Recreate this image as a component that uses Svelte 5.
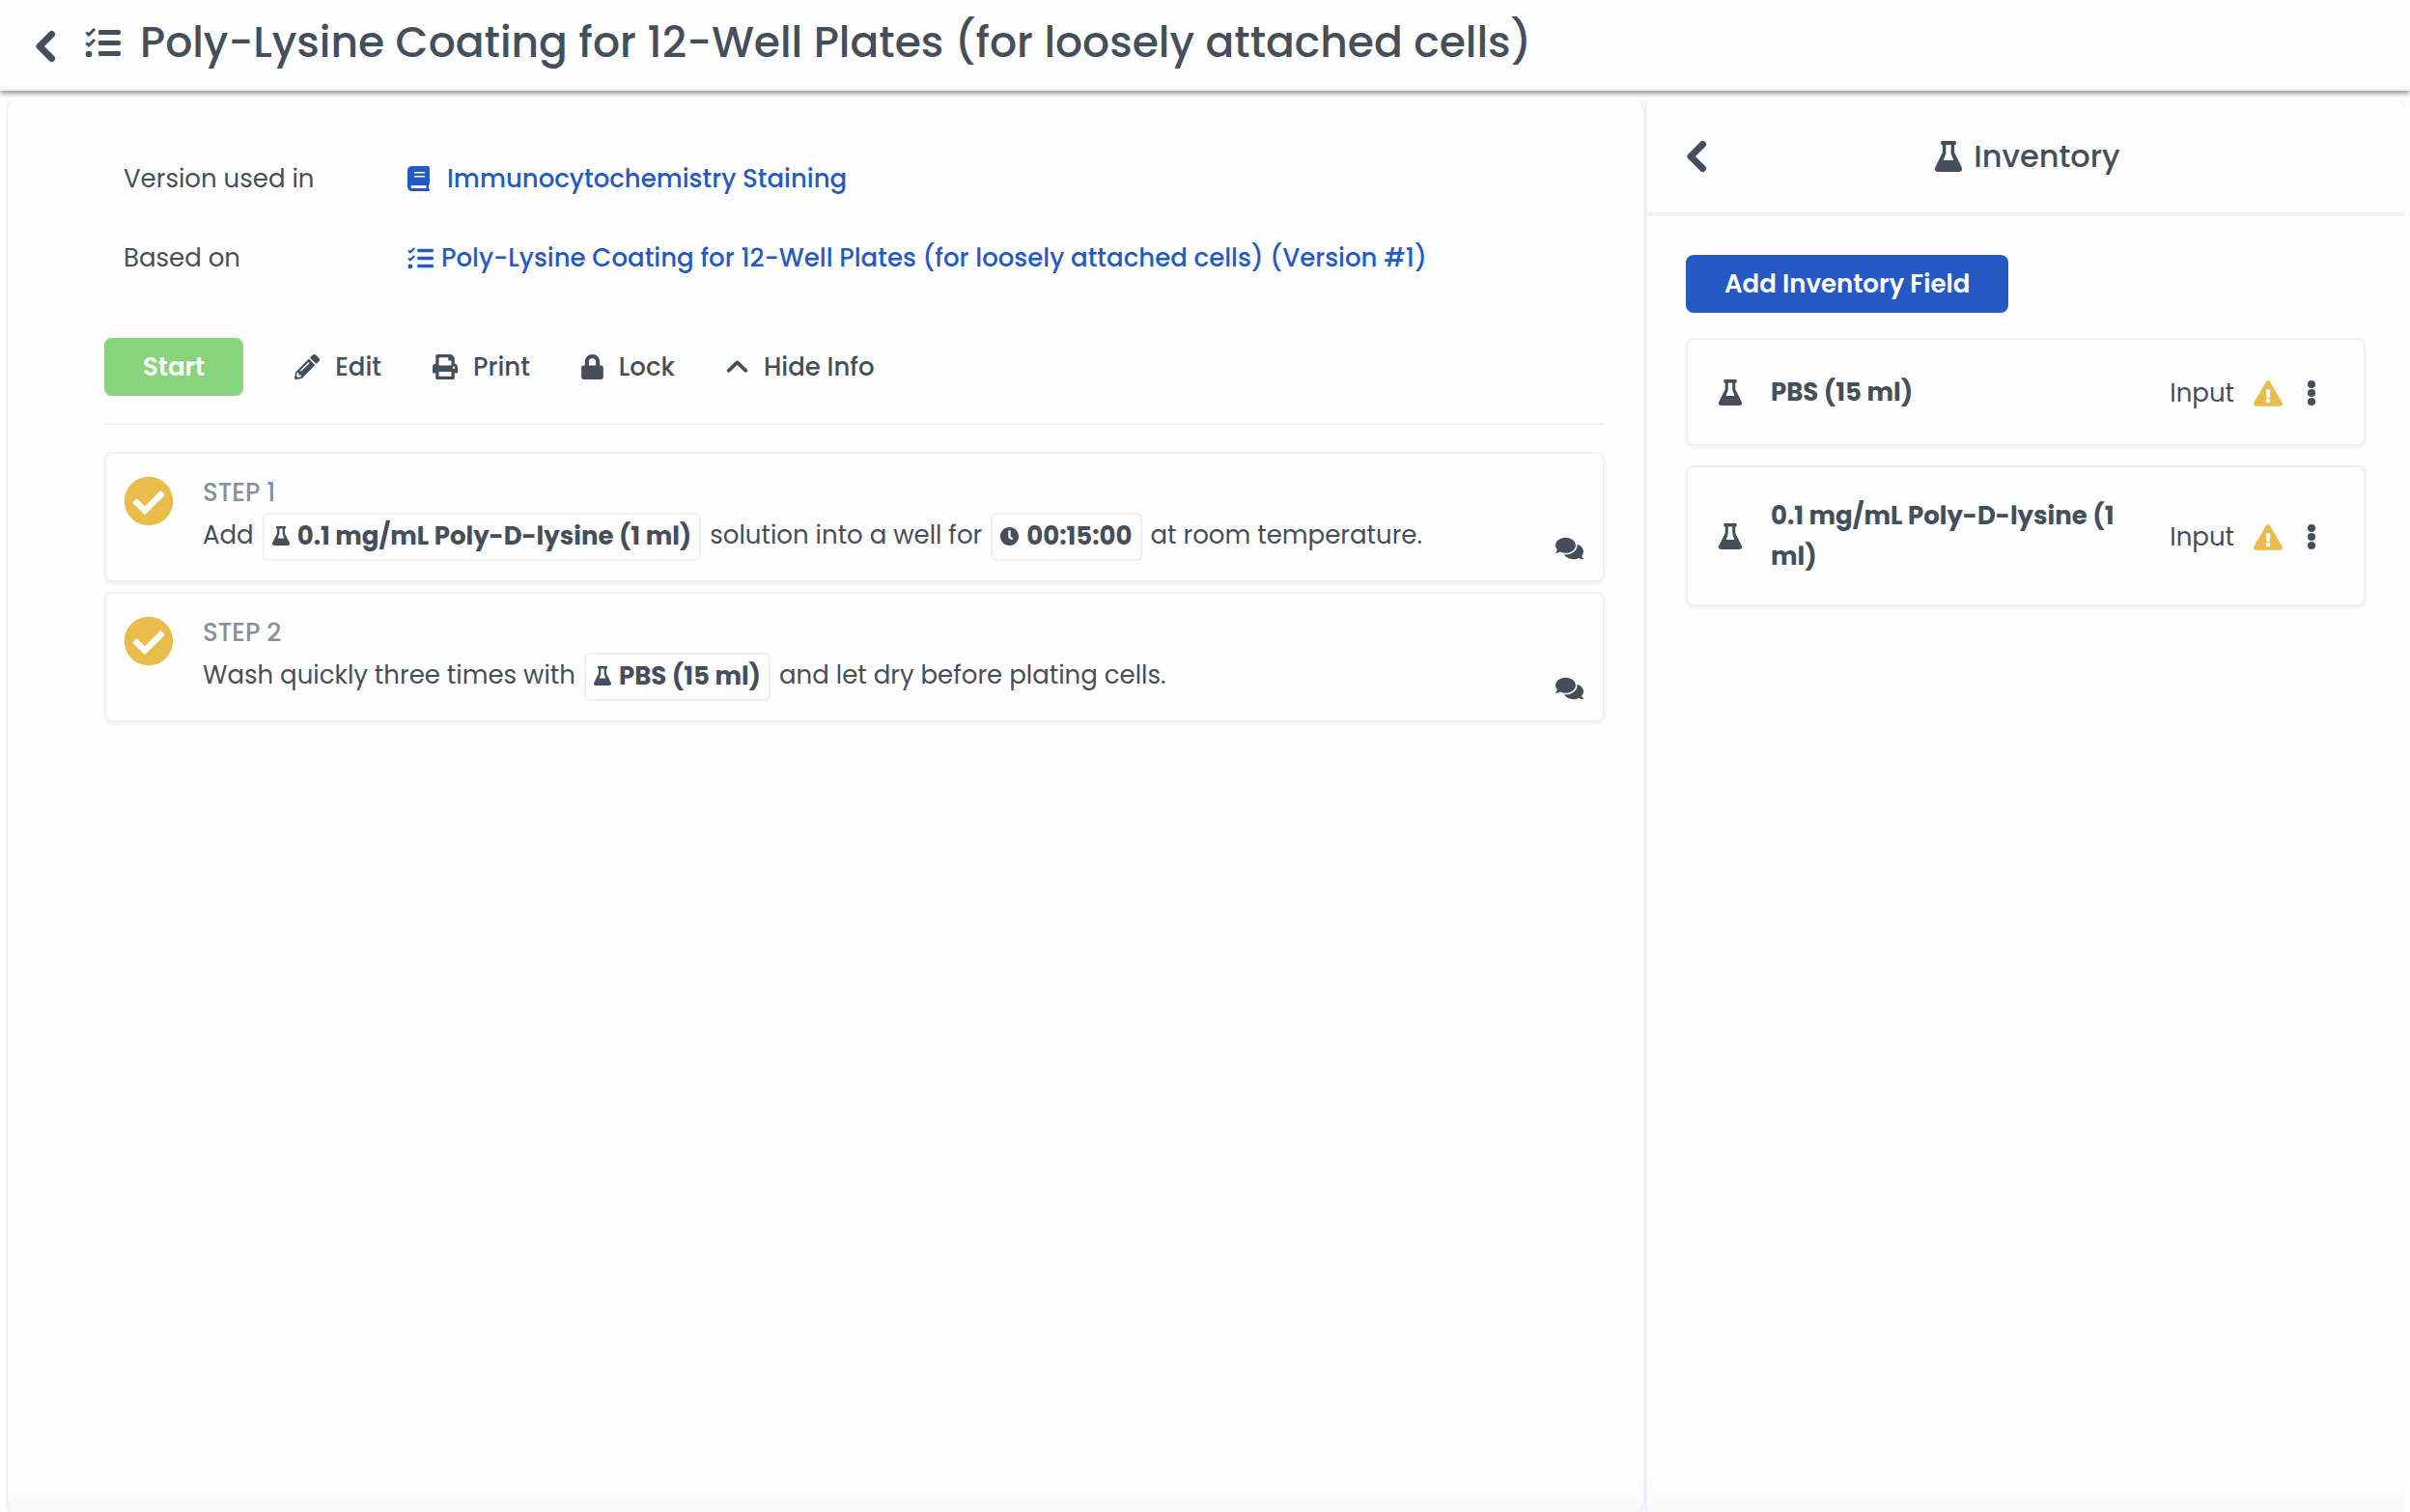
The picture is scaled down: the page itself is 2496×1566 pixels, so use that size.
<script lang="ts">
  const flask = "M8 0h16q1 0 1 2t-1 2h-1v8l8 14q3 6-3 6H4q-6 0-3-6l8-14V4H8Q7 4 7 2t1-2zM13 4v9l-3 7h12l-3-7V4z";
  const warning = "M569.517 440.013C587.975 472.007 564.806 512 527.94 512H48.054c-36.937 0-59.999-40.055-41.577-71.987L246.423 23.985c18.467-32.009 64.72-31.951 83.154 0l239.94 416.028zM288 354c-25.405 0-46 20.595-46 46s20.595 46 46 46 46-20.595 46-46-20.595-46-46-46zm-43.673-165.346l7.418 136c.347 6.364 5.609 11.346 11.982 11.346h48.546c6.373 0 11.635-4.982 11.982-11.346l7.418-136c.375-6.874-5.098-12.654-11.982-12.654h-63.383c-6.884 0-12.356 5.78-11.981 12.654z";
  const comments = "M416 192c0-88.4-93.1-160-208-160S0 103.6 0 192c0 34.3 14.1 65.9 38 92-13.4 30.2-35.5 54.2-35.8 54.5-2.2 2.3-2.8 5.7-1.5 8.7S4.8 352 8 352c36.6 0 66.9-12.3 88.7-25 32.2 15.7 70.3 25 111.3 25 114.9 0 208-71.6 208-160zm122 220c23.9-26 38-57.7 38-92 0-66.9-53.5-124.2-129.3-148.1.9 6.6 1.3 13.3 1.3 20.1 0 105.9-107.7 192-240 192-10.8 0-21.3-.8-31.7-1.9C207.8 439.6 281.8 480 368 480c41 0 79.1-9.2 111.3-25 21.8 12.7 52.1 25 88.7 25 3.2 0 6.1-1.9 7.3-4.8 1.3-2.9.7-6.3-1.5-8.7-.3-.3-22.4-24.2-35.8-54.5z";
  const checkCircle = "M504 256c0 136.967-111.033 248-248 248S8 392.967 8 256 119.033 8 256 8s248 111.033 248 248zM227.314 387.314l184-184c6.248-6.248 6.248-16.379 0-22.627l-22.627-22.627c-6.248-6.249-16.379-6.249-22.628 0L216 308.118l-70.059-70.059c-6.248-6.248-16.379-6.248-22.628 0l-22.627 22.627c-6.248 6.248-6.248 16.379 0 22.627l104 104c6.249 6.249 16.379 6.249 22.628.001z";
  const clock = "M256 8C119 8 8 119 8 256s111 248 248 248 248-111 248-248S393 8 256 8zm92.49 313l-20 25a16 16 0 01-22.49 2.5l-67-49.72a40 40 0 01-15-31.23V112a16 16 0 0116-16h32a16 16 0 0116 16v144l58 42.5a16 16 0 012.49 22.5z";

  const actions = [
    {
      label: "Edit",
      width: 26,
      viewBox: "0 0 512 512",
      path: "M497.9 142.1l-46.1 46.1c-4.7 4.7-12.3 4.7-17 0l-111-111c-4.7-4.7-4.7-12.3 0-17l46.1-46.1c18.7-18.7 49.1-18.7 67.9 0l60.1 60.1c18.8 18.7 18.8 49.1 0 67.9zM284.2 99.8L21.6 362.4.4 483.9c-2.9 16.4 11.4 30.6 27.8 27.8l121.5-21.3 262.6-262.6c4.7-4.7 4.7-12.3 0-17l-111-111c-4.8-4.7-12.4-4.7-17.1 0zM124.1 339.9c-5.5-5.5-5.5-14.3 0-19.8l154-154c5.5-5.5 14.3-5.5 19.8 0s5.5 14.3 0 19.8l-154 154c-5.5 5.5-14.3 5.5-19.8 0zM88 424h48v36.3l-64.5 11.3-31.1-31.1L51.7 376H88v48z",
    },
    {
      label: "Print",
      width: 26,
      viewBox: "0 0 512 512",
      path: "M448 192V77.25c0-8.49-3.37-16.62-9.37-22.63L393.37 9.37c-6-6-14.14-9.37-22.63-9.37H96C78.33 0 64 14.33 64 32v160c-35.35 0-64 28.65-64 64v112c0 8.84 7.16 16 16 16h48v96c0 17.67 14.33 32 32 32h320c17.67 0 32-14.33 32-32v-96h48c8.84 0 16-7.16 16-16V256c0-35.35-28.65-64-64-64zm-64 256H128v-96h256v96zm0-224H128V64h192v48c0 8.84 7.16 16 16 16h48v96zm48 72c-13.25 0-24-10.75-24-24 0-13.26 10.75-24 24-24s24 10.74 24 24c0 13.25-10.75 24-24 24z",
    },
    {
      label: "Lock",
      width: 23,
      viewBox: "0 0 448 512",
      path: "M400 224h-24v-72C376 68.2 307.8 0 224 0S72 68.2 72 152v72H48c-26.5 0-48 21.5-48 48v192c0 26.5 21.5 48 48 48h352c26.5 0 48-21.5 48-48V272c0-26.5-21.5-48-48-48zm-104 0H152v-72c0-39.7 32.3-72 72-72s72 32.3 72 72v72z",
    },
    {
      label: "Hide Info",
      width: 23,
      viewBox: "0 0 23 26",
      path: "M9.8 7.3q1.7-1.6 3.4 0l8.6 8.5q1 1.2 0 2.3-1.5 1.3-3 0l-7.3-7.2-7.3 7.2q-1.5 1.3-3 0-1-1.2 0-2.3z",
    },
  ];

  const steps = [
    [
      { text: "Add" },
      { text: "0.1 mg/mL Poly-D-lysine (1 ml)", icon: "flask" },
      { text: "solution into a well for" },
      { text: "00:15:00", icon: "clock" },
      { text: "at room temperature." },
    ],
    [
      { text: "Wash quickly three times with" },
      { text: "PBS (15 ml)", icon: "flask" },
      { text: "and let dry before plating cells." },
    ],
  ];

  const inventory = ["PBS (15 ml)", "0.1 mg/mL Poly-D-lysine (1 ml)"];
</script>

{#snippet chevron()}
  <svg width="22" height="34" viewBox="0 0 22 34" aria-hidden="true">
    <path class="chevron" d="M17.5 4.500L5 17l12.500 12.500" />
  </svg>
{/snippet}

{#snippet tasks(width: number, height: number)}
  <svg {width} {height} viewBox="0 0 37 31" aria-hidden="true">
    <path d="M15 2h20q2 0 2 2v1q0 2-2 2H15q-1 0-1-2V4q0-2 1-2zM15 13h20q2 0 2 2v1q0 2-2 2H15q-1 0-1-2v-1q0-2 1-2zM15 24h20q2 0 2 2v1q0 2-2 2H15q-1 0-1-2v-1q0-2 1-2z" />
    <circle cx="4" cy="27" r="3.3" />
    <path class="ticks" d="M1.300 4.500L4 7l6-6M1.300 15.500L4 18l6-6" />
  </svg>
{/snippet}

{#snippet flaskIcon(width: number, height: number)}
  <svg {width} {height} viewBox="0 0 32 32" preserveAspectRatio="none" aria-hidden="true">
    <path fill-rule="evenodd" d={flask} />
  </svg>
{/snippet}

<div class="page">
  <header>
    <button class="icon" aria-label="Back">{@render chevron()}</button>
    {@render tasks(37, 31)}
    <h1>Poly-Lysine Coating for 12-Well Plates (for loosely attached cells)</h1>
  </header>

  <div class="body">
    <main>
      <dl>
        <dt>Version used in</dt>
        <dd>
          <a class="wide" href="#staining">
            <svg width="23" height="26" viewBox="0 0 23 26" aria-hidden="true">
              <path fill-rule="evenodd" d="M5 0h16q2 0 2 2v16q0 1-1 2v3q1 1 1 2t-1 1H5q-5 0-5-5V5q0-5 5-5zM7 6v1.500h11V6zM7 10v1.500h11V10zM5 20q-1.500 0-1.500 1.500T5 23h14.500v-3z" />
            </svg>
            Immunocytochemistry Staining
          </a>
        </dd>
        <dt>Based on</dt>
        <dd>
          <a href="#version-1">
            {@render tasks(27, 23)}
            Poly-Lysine Coating for 12-Well Plates (for loosely attached cells) (Version #1)
          </a>
        </dd>
      </dl>

      <div class="toolbar">
        <button class="primary start">Start</button>
        {#each actions as action}
          <button class="action">
            <svg width={action.width} height="26" viewBox={action.viewBox} aria-hidden="true">
              <path d={action.path} />
            </svg>
            {action.label}
          </button>
        {/each}
      </div>

      <ol class="steps">
        {#each steps as parts, i}
          <li class="card step">
            <svg class="done" width="52" height="52" viewBox="0 0 512 512" aria-hidden="true">
              <path d={checkCircle} />
            </svg>
            <div class="content">
              <h2>STEP {i + 1}</h2>
              <p>
                {#each parts as part}
                  {#if part.icon}
                    <span class="chip">
                      {#if part.icon === "clock"}
                        <svg width="19" height="19" viewBox="8 8 496 496" aria-hidden="true">
                          <path d={clock} />
                        </svg>
                      {:else}
                        {@render flaskIcon(18, 20)}
                      {/if}
                      {part.text}
                    </span>
                  {:else}
                    <span>{part.text}</span>
                  {/if}
                {/each}
              </p>
            </div>
            <button class="icon chat" aria-label="Comments">
              <svg width="29" height="26" viewBox="0 0 576 512" aria-hidden="true">
                <path d={comments} />
              </svg>
            </button>
          </li>
        {/each}
      </ol>
    </main>

    <aside>
      <div class="aside-head">
        <button class="icon" aria-label="Collapse">{@render chevron()}</button>
        <h2>
          {@render flaskIcon(28, 32)}
          Inventory
        </h2>
      </div>
      <div class="aside-body">
        <button class="primary">Add Inventory Field</button>
        <ul>
          {#each inventory as item}
            <li class="card item">
              {@render flaskIcon(24, 27)}
              <strong>{item}</strong>
              <div class="status">
                <span>Input</span>
                <svg class="warning" width="30" height="27" viewBox="0 0 576 512" aria-label="Warning">
                  <path d={warning} />
                </svg>
                <button class="icon" aria-label="More">
                  <svg width="8" height="28" viewBox="0 0 8 28" aria-hidden="true">
                    <circle cx="4" cy="5" r="4" />
                    <circle cx="4" cy="14" r="4" />
                    <circle cx="4" cy="23" r="4" />
                  </svg>
                </button>
              </div>
            </li>
          {/each}
        </ul>
      </div>
    </aside>
  </div>
</div>

<style>
  :global(body) {
    margin: 0;
    background: #fefefe;
  }

  .page {
    display: flex;
    flex-direction: column;
    min-height: 100vh;
    box-sizing: border-box;
    font: 26px/42px Poppins, Inter, sans-serif;
    color: #454f5b;
  }

  svg {
    flex: none;
    fill: currentColor;
  }

  .ticks,
  .chevron {
    fill: none;
    stroke: currentColor;
    stroke-width: 3;
  }

  .chevron {
    stroke-width: 7;
    stroke-linecap: round;
    stroke-linejoin: round;
  }

  h1, h2, p, dl, dd, ol, ul {
    margin: 0;
    padding: 0;
    list-style: none;
  }

  button {
    font: inherit;
    color: inherit;
    border: none;
    background: none;
    padding: 0;
    cursor: pointer;
  }

  a {
    display: flex;
    align-items: center;
    gap: 8px;
    color: #255ac4;
    font-weight: 500;
    text-decoration: none;
  }

  .wide {
    gap: 18px;
  }

  .icon {
    display: flex;
    flex: none;
  }

  header {
    display: flex;
    align-items: center;
    height: 88px;
    padding: 0 36px 4px;
    border-bottom: 2px solid #eff0f6;
    box-shadow: 0 3px 5px rgba(0, 0, 0, 0.4);
    background: #fefefe;
  }

  header .icon {
    padding-top: 8px;
  }

  header > svg {
    margin: 0 20px 0 30px;
  }

  h1 {
    font-size: 44px;
    font-weight: 500;
    line-height: 64px;
  }

  .body {
    flex: 1;
    display: flex;
    margin: 10px 6px 0;
    background: #f8f8fb;
  }

  main,
  aside {
    background: linear-gradient(to top, #f9f9f9, #fefefe 40px);
  }

  main {
    flex: 1;
    min-width: 0;
    padding: 60px 40px 40px 100px;
    border: 2px solid #eff0f6;
    border-width: 0 2px;
    border-radius: 12px;
  }

  dl {
    display: grid;
    grid-template-columns: 294px 1fr;
    row-gap: 40px;
    padding-left: 20px;
  }

  .toolbar {
    display: flex;
    align-items: center;
    gap: 53px;
    margin-top: 62px;
    padding-bottom: 28px;
    border-bottom: 2px solid #eff0f6;
  }

  .primary {
    height: 60px;
    padding: 0 40px;
    border-radius: 8px;
    background: #255ac4;
    color: #fefefe;
    font-weight: 600;
  }

  .start {
    background: #88d47c;
  }

  .action {
    display: flex;
    align-items: center;
    gap: 16px;
    font-weight: 500;
  }

  .card {
    box-sizing: border-box;
    border: 2px solid #eff0f6;
    border-radius: 8px;
    box-shadow: 0 2px 3px #eff0f6;
  }

  .steps {
    display: flex;
    flex-direction: column;
    gap: 10px;
    margin-top: 28px;
  }

  .step {
    display: flex;
    padding: 19px 20px 20px 18px;
  }

  .done {
    margin-top: 4px;
    color: #eabd4a;
  }

  .content {
    flex: 1;
    padding-left: 30px;
  }

  .content h2 {
    font-size: 26px;
    font-weight: 500;
    line-height: 42px;
    color: #8590a0;
  }

  p {
    display: flex;
    flex-wrap: wrap;
    gap: 9px;
    line-height: 46px;
  }

  .chip {
    display: inline-flex;
    align-items: center;
    gap: 8px;
    box-sizing: border-box;
    height: 50px;
    padding: 0 8px 2px;
    border: 2px solid #eff0f6;
    border-radius: 6px;
    font-weight: 700;
  }

  .chat {
    align-self: flex-end;
  }

  aside {
    flex: 0 0 784px;
    border-left: 2px solid #eff0f6;
    border-radius: 0 12px 12px 0;
  }

  .aside-head {
    display: flex;
    align-items: center;
    height: 116px;
    padding: 0 40px;
    border-bottom: 4px solid #eff1f5;
  }

  .aside-head h2 {
    flex: 1;
    display: flex;
    align-items: center;
    justify-content: center;
    gap: 12px;
    padding-right: 18px;
    font-size: 32px;
    font-weight: 500;
  }

  .aside-body {
    padding: 40px;
  }

  ul {
    display: flex;
    flex-direction: column;
    gap: 20px;
    margin-top: 26px;
  }

  .item {
    display: flex;
    align-items: center;
    min-height: 112px;
    padding: 29px 50px 29px 32px;
  }

  .item strong {
    flex: 1;
    padding: 0 50px 0 30px;
    font-weight: 700;
  }

  .status {
    display: flex;
    align-items: center;
    padding-top: 2px;
  }

  .warning {
    margin: 0 26px 0 20px;
    color: #eabd4a;
  }
</style>
